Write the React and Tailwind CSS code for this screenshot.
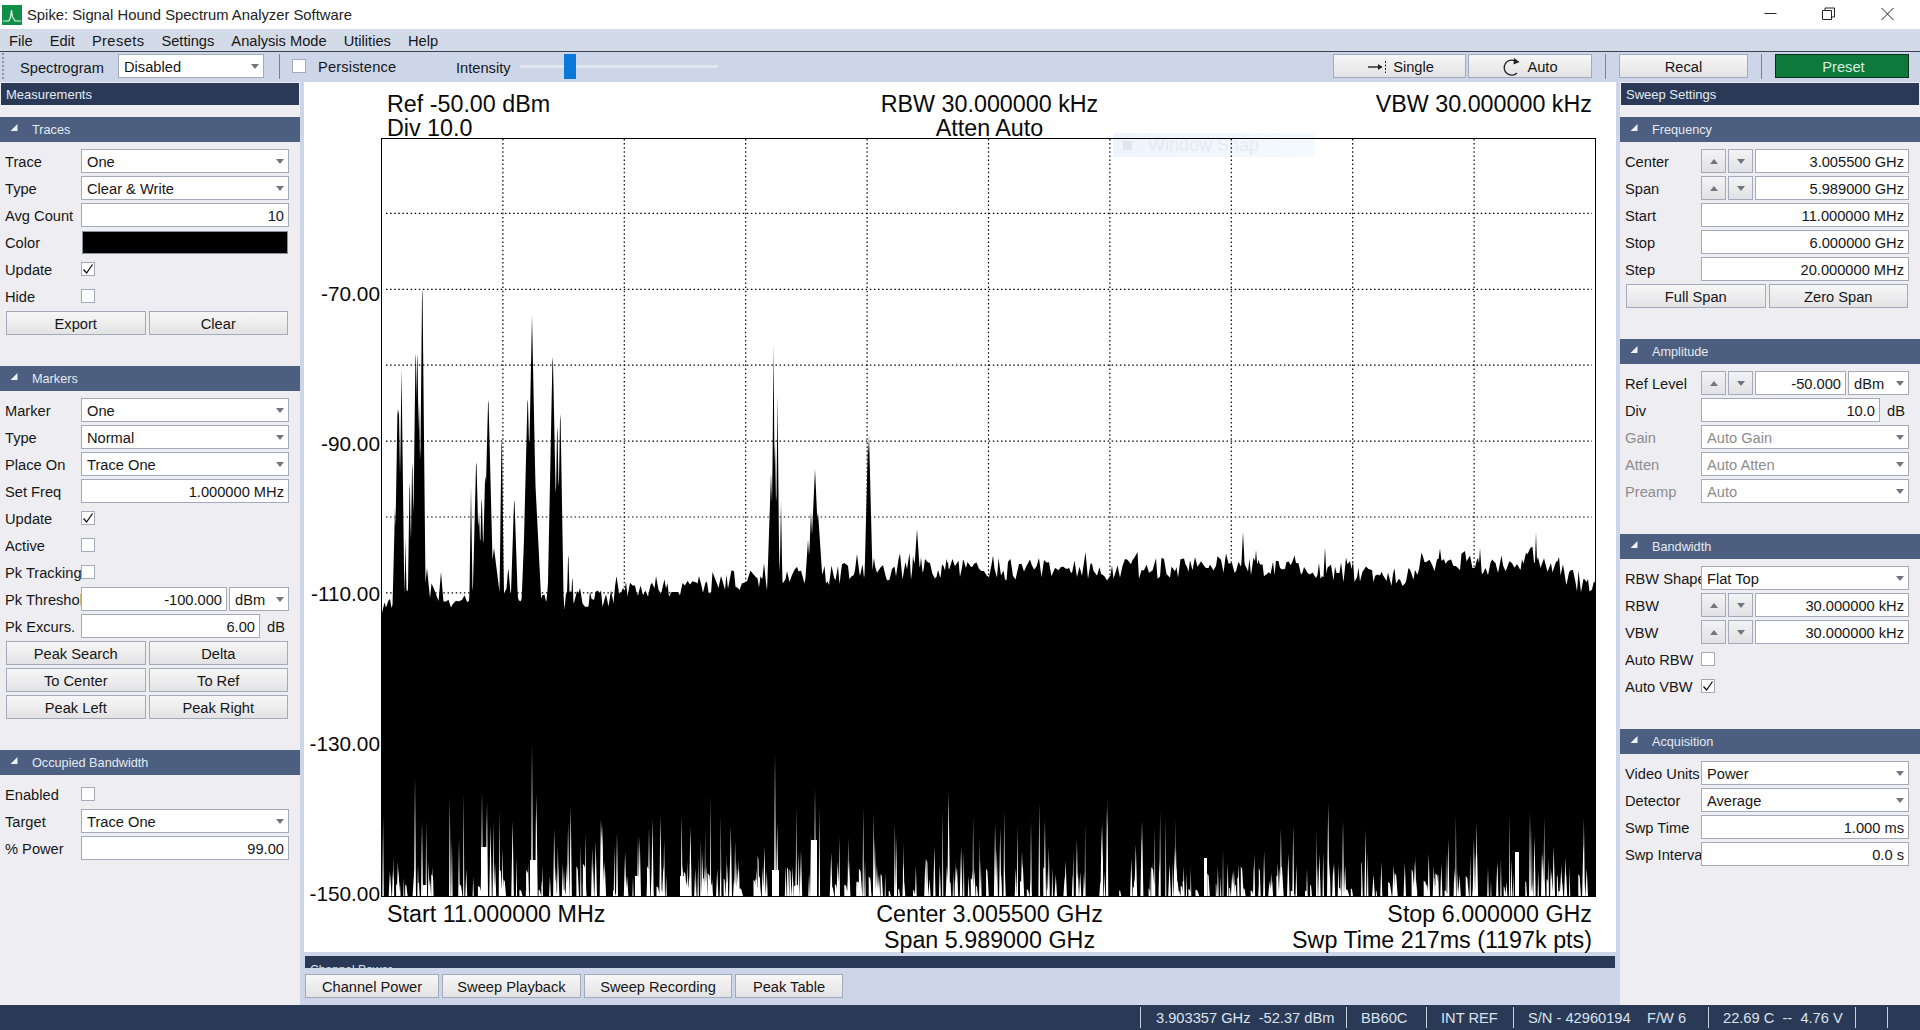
import React from "react";

/* ---------- spectrum data (deterministic) ---------- */
function rng(seed) {
  let a = seed;
  return () => {
    a |= 0; a = (a + 0x6d2b79f5) | 0;
    let t = Math.imul(a ^ (a >>> 15), 1 | a);
    t = (t + Math.imul(t ^ (t >>> 7), 61 | t)) ^ t;
    return ((t ^ (t >>> 14)) >>> 0) / 4294967296;
  };
}
const FLOOR = [[381,612],[395,608],[430,600],[560,603],[600,598],[680,587],[760,582],[900,574],[1000,572],[1240,566],[1300,570],[1405,578],[1418,566],[1560,562],[1566,578],[1596,580]];
const floorAt = (x) => {
  for (let i = 0; i < FLOOR.length - 1; i++) {
    const [x0, y0] = FLOOR[i], [x1, y1] = FLOOR[i + 1];
    if (x >= x0 && x <= x1) return y0 + ((y1 - y0) * (x - x0)) / (x1 - x0);
  }
  return 580;
};
const PEAKS = [[395,507,40],[397.7,397,60],[398.7,397,60],[401.5,368,80],[405.5,537,60],[409.7,469,70],[412.3,449,70],[415.7,337,80],[417.3,338,80],[419,400,60],[422.3,268,100],[427,568,10],[441,572,12],[471,486,70],[476.3,454,40],[479,511,30],[481.7,491,40],[485.3,468,40],[488.3,392,40],[494,548,8],[501.7,422,80],[508.3,567,12],[514.3,494,30],[524.3,533,25],[527.7,391,40],[532,315,50],[535,476,20],[548.3,582,10],[552.7,347,50],[557.3,415,60],[560.3,402,60],[568.3,547,40],[572.3,573,25],[764,563,10],[771,473,30],[773.5,344,120],[775,442,60],[777.5,395,100],[781,501,60],[808,540,15],[811,511,25],[815,469,22],[818,512,15],[857,554,8],[868,440,40],[869,434,40],[874,558,8],[913,555,20],[917,529,15],[921,557,10],[948,562,20],[963,560,8],[1243,532,20],[1536,532,30],[1256,550,12],[1325,547,20],[1480,548,15]];
function buildTrace() {
  const r = rng(7);
  // jagged profile: knots every 2-3 px, plus a slow wander over ~25 px
  const knots = [];
  let kx = 381;
  while (kx < 1600) {
    const up = r();
    knots.push([kx, 9 - Math.pow(up, 1.3) * 22 - (r() > 0.92 ? 8 : 0)]);
    kx += 1.5 + Math.floor(r() * 2.4);
  }
  const slow = Array.from({ length: 60 }, () => r() * 10 - 5);
  const noiseAt = (x) => {
    let lo = 0, hi = knots.length - 1;
    while (hi - lo > 1) {
      const m = (lo + hi) >> 1;
      if (knots[m][0] <= x) lo = m; else hi = m;
    }
    const [x0, n0] = knots[lo], [x1, n1] = knots[hi];
    const s = (x - 381) / 25;
    const i = Math.floor(s), f = s - i;
    const w = slow[i] * (1 - f) + slow[i + 1] * f;
    return n0 + ((n1 - n0) * (x - x0)) / (x1 - x0) + w;
  };
  let d = "M382 897";
  for (let x = 382; x <= 1595; x += 0.5) {
    let y = floorAt(x) + noiseAt(x);
    for (const [px, py, s] of PEAKS) y = Math.min(y, py + Math.abs(x - px) * s);
    d += `L${x} ${y.toFixed(1)}`;
  }
  return d + "L1595 897Z";
}
function buildSpikes() {
  const r = rng(41);
  let d = "";
  for (let i = 0; i < 340; i++) {
    const x = 382 + r() * 1213;
    const h = 12 + Math.pow(r(), 3) * 78 + r() * 20;
    const w = 0.45 + r() * 0.95;
    d += `M${(x - w).toFixed(1)} 896L${x.toFixed(1)} ${(896 - h).toFixed(1)}L${(x + w).toFixed(1)} 896Z`;
  }
  for (let i = 0; i < 120; i++) {
    const x = 382 + r() * 1210;
    const w = 1 + r() * 3;
    const h = 5 + r() * r() * 38;
    d += `M${x.toFixed(1)} 896L${x.toFixed(1)} ${(896 - h).toFixed(1)}L${(x + w * 0.5).toFixed(1)} ${(896 - h * 0.9).toFixed(1)}L${(x + w).toFixed(1)} 896Z`;
  }
  const tall = [[415,777],[532,743],[775,753],[815,788],[482,790],[487,800],[617,832],[638,836],[1530,812],[1343,820]];
  tall.forEach(([x, y]) => { d += `M${x - 1} 896L${x} ${y}L${x + 1} 896Z`; });
  const blocks = [[481,847,6],[530,860,6],[772,870,7],[811,840,6],[680,876,5],[635,876,5],[423,885,4],[1515,852,4],[1204,858,3]];
  blocks.forEach(([x, y, w]) => { d += `M${x} 896V${y}H${x + w}V896Z`; });
  return d;
}
const TRACE = buildTrace();
const SPIKES = buildSpikes();
const VGRID = Array.from({ length: 9 }, (_, k) => 381.5 + 121.4 * (k + 1));
const HGRID = Array.from({ length: 9 }, (_, k) => 137.5 + 75.9 * (k + 1));

function Spectrum() {
  return (
    <svg viewBox="382 139 1213 757" className="block w-full h-full">
      <g stroke="#000" strokeWidth="1.2" strokeDasharray="1.5 2.6" fill="none">
        {VGRID.map((x) => <line key={x} x1={x} x2={x} y1="139" y2="896" />)}
        {HGRID.map((y) => <line key={y} x1="386" x2="1592" y1={y} y2={y} />)}
      </g>
      <path d={TRACE} fill="#000" />
      <path d={SPIKES} fill="#fff" />
    </svg>
  );
}

/* ---------- small controls ---------- */
const Caret = ({ c = "border-t-[#6f7680]" }) => (
  <span className={`w-0 h-0 border-x-[4px] border-x-transparent border-t-[5px] ${c}`} />
);
const Combo = ({ v, dis, className = "flex-1" }) => (
  <div className={`${className} h-[24px] flex items-center justify-between pl-[5px] pr-[4px] bg-white border border-[#a3abba] ${dis ? "text-[#8c8c8c]" : ""}`}>
    <span className="whitespace-nowrap pt-[1px]">{v}</span>
    <Caret />
  </div>
);
const Input = ({ v, className = "flex-1" }) => (
  <div className={`${className} h-[24px] flex items-center justify-end pr-[4px] pt-[2px] bg-white border border-[#a3abba] whitespace-nowrap`}>{v}</div>
);
const Check = ({ on }) => (
  <div className="w-[14px] h-[14px] bg-white border border-[#a3abba] flex items-center justify-center shrink-0">
    {on && (
      <svg width="12" height="12" viewBox="0 0 12 12" fill="none" stroke="#111" strokeWidth="1.3">
        <path d="M1.5 6.5 L4.6 10 L10.5 1.5" />
      </svg>
    )}
  </div>
);
const Btn = ({ children, className = "flex-1" }) => (
  <div className={`${className} h-[24px] flex items-center justify-center pt-[2px] bg-gradient-to-b from-[#f7f7f7] to-[#e3e3e5] border border-[#a3abba] whitespace-nowrap`}>{children}</div>
);
const Step = () => (
  <>
    <div className="w-[25px] h-[24px] flex items-center justify-center bg-gradient-to-b from-[#f3f3f5] to-[#e2e2e6] border border-[#a3abba] shrink-0">
      <span className="w-0 h-0 border-x-[4px] border-x-transparent border-b-[5px] border-b-[#6f7680]" />
    </div>
    <div className="w-[25px] h-[24px] flex items-center justify-center bg-gradient-to-b from-[#f3f3f5] to-[#e2e2e6] border border-[#a3abba] shrink-0">
      <Caret />
    </div>
  </>
);
const Row = ({ label, dis, children }) => (
  <div className="flex items-center h-[24px] mb-[3px] pl-[5px] pr-[11px]">
    <div className={`w-[76px] shrink-0 overflow-hidden whitespace-nowrap pt-[2px] ${dis ? "text-[#8c8c8c]" : ""}`}>{label}</div>
    <div className="flex-1 flex items-center gap-[2px] min-w-0">{children}</div>
  </div>
);
const BtnRow = ({ a, b }) => (
  <div className="flex h-[24px] mb-[3px] pl-[6px] pr-[12px] gap-[3px]">
    <Btn>{a}</Btn>
    <Btn>{b}</Btn>
  </div>
);
const Section = ({ title, first, children }) => (
  <div className={first ? "mt-[12px]" : "mt-[31px]"}>
    <div className="h-[25px] bg-[#4c5f80] flex items-center text-[12.7px] text-[#e4eaf3]">
      <svg width="10" height="10" viewBox="0 0 10 10" className="ml-[9px] mb-[3px]"><path d="M8.5 1 V8 H1.5 Z" fill="#eef2f8" /></svg>
      <span className="ml-[13px] pt-[2px]">{title}</span>
    </div>
    <div className="pt-[7px]">{children}</div>
  </div>
);
const DarkBar = ({ title }) => (
  <div className="h-[22px] mx-[1px] bg-[#2a3a56] flex items-center pl-[5px] pt-[2px] text-[13px] text-[#e4eaf3]">{title}</div>
);
const VSep = () => <div className="w-px h-[25px] bg-[#79818f] shrink-0" />;

/* ---------- panels ---------- */
function LeftPanel() {
  return (
    <div className="w-[300px] shrink-0 bg-[#eeeef2] pt-px">
      <DarkBar title="Measurements" />
      <Section title="Traces" first>
        <Row label="Trace"><Combo v="One" /></Row>
        <Row label="Type"><Combo v="Clear & Write" /></Row>
        <Row label="Avg Count"><Input v="10" /></Row>
        <Row label="Color"><div className="flex-1 mx-px h-[23px] bg-black border border-[#8a92a0]" /></Row>
        <Row label="Update"><Check on /></Row>
        <Row label="Hide"><Check /></Row>
        <BtnRow a="Export" b="Clear" />
      </Section>
      <Section title="Markers">
        <Row label="Marker"><Combo v="One" /></Row>
        <Row label="Type"><Combo v="Normal" /></Row>
        <Row label="Place On"><Combo v="Trace One" /></Row>
        <Row label="Set Freq"><Input v="1.000000 MHz" /></Row>
        <Row label="Update"><Check on /></Row>
        <Row label="Active"><Check /></Row>
        <Row label="Pk Tracking"><Check /></Row>
        <Row label="Pk Threshold"><Input v="-100.000" className="w-[146px]" /><Combo v="dBm" className="flex-1" /></Row>
        <Row label="Pk Excurs."><Input v="6.00" className="w-[179px]" /><span className="ml-[5px] pt-[2px]">dB</span></Row>
        <BtnRow a="Peak Search" b="Delta" />
        <BtnRow a="To Center" b="To Ref" />
        <BtnRow a="Peak Left" b="Peak Right" />
      </Section>
      <Section title="Occupied Bandwidth">
        <Row label="Enabled"><Check /></Row>
        <Row label="Target"><Combo v="Trace One" /></Row>
        <Row label="% Power"><Input v="99.00" /></Row>
      </Section>
    </div>
  );
}

function RightPanel() {
  return (
    <div className="w-[300px] shrink-0 bg-[#eeeef2] pt-px">
      <DarkBar title="Sweep Settings" />
      <Section title="Frequency" first>
        <Row label="Center"><Step /><Input v="3.005500 GHz" /></Row>
        <Row label="Span"><Step /><Input v="5.989000 GHz" /></Row>
        <Row label="Start"><Input v="11.000000 MHz" /></Row>
        <Row label="Stop"><Input v="6.000000 GHz" /></Row>
        <Row label="Step"><Input v="20.000000 MHz" /></Row>
        <BtnRow a="Full Span" b="Zero Span" />
      </Section>
      <Section title="Amplitude">
        <Row label="Ref Level"><Step /><Input v="-50.000" className="w-[91px]" /><Combo v="dBm" className="flex-1" /></Row>
        <Row label="Div"><Input v="10.0" className="w-[179px]" /><span className="ml-[5px] pt-[2px]">dB</span></Row>
        <Row label="Gain" dis><Combo v="Auto Gain" dis /></Row>
        <Row label="Atten" dis><Combo v="Auto Atten" dis /></Row>
        <Row label="Preamp" dis><Combo v="Auto" dis /></Row>
      </Section>
      <Section title="Bandwidth">
        <Row label="RBW Shape"><Combo v="Flat Top" /></Row>
        <Row label="RBW"><Step /><Input v="30.000000 kHz" /></Row>
        <Row label="VBW"><Step /><Input v="30.000000 kHz" /></Row>
        <Row label="Auto RBW"><Check /></Row>
        <Row label="Auto VBW"><Check on /></Row>
      </Section>
      <Section title="Acquisition">
        <Row label="Video Units"><Combo v="Power" /></Row>
        <Row label="Detector"><Combo v="Average" /></Row>
        <Row label="Swp Time"><Input v="1.000 ms" /></Row>
        <Row label="Swp Interval"><Input v="0.0 s" /></Row>
      </Section>
    </div>
  );
}

function Plot() {
  const labels = ["-70.00", "-90.00", "-110.00", "-130.00", "-150.00"];
  return (
    <div className="relative h-[870px] bg-white text-[23.3px] text-[#0a0a0a]">
      <div className="absolute left-[809px] top-[51px] w-[202px] h-[24px] bg-gradient-to-r from-[#eef4fd] to-[#f3fbff] flex items-center text-[18px] text-[#e7ebef]">
        <span className="ml-[10px] w-[9px] h-[9px] bg-[#dfe5ef] shrink-0" />
        <span className="ml-[16px]">Window Snap</span>
      </div>
      <div className="relative ml-[77px] w-[1215px] h-[56px] pt-[10px] pl-[6px] pr-[4px] grid grid-cols-3 leading-[24px]">
        <div className="whitespace-nowrap">Ref -50.00 dBm<br />Div 10.0</div>
        <div className="text-center whitespace-nowrap">RBW 30.000000 kHz<br />Atten Auto</div>
        <div className="text-right whitespace-nowrap">VBW 30.000000 kHz</div>
      </div>
      <div className="relative flex h-[759px]">
        <div className="w-[77px] shrink-0 pt-[81px] pr-[1px] text-right text-[20.8px]">
          {labels.map((l) => (
            <div key={l} className="h-[150px] flex items-center justify-end">{l}</div>
          ))}
        </div>
        <div className="w-[1215px] h-[759px] border border-black">
          <Spectrum />
        </div>
      </div>
      <div className="ml-[77px] w-[1215px] pt-[4px] pl-[6px] pr-[4px] grid grid-cols-3 leading-[26px]">
        <div className="whitespace-nowrap">Start 11.000000 MHz</div>
        <div className="text-center whitespace-nowrap">Center 3.005500 GHz<br />Span 5.989000 GHz</div>
        <div className="text-right whitespace-nowrap">Stop 6.000000 GHz<br />Swp Time 217ms (1197k pts)</div>
      </div>
    </div>
  );
}

function Center() {
  return (
    <div className="flex-1 min-w-0 flex flex-col">
      <Plot />
      <div className="h-[12px] mt-[4px] mx-px bg-[#2a3a56] overflow-hidden text-[12px] text-[#d8e0ee] pl-[5px] pt-[7px] leading-[14px]">Channel Power</div>
      <div className="flex pt-[6px] pl-px gap-[3px]">
        <Btn className="w-[134px]">Channel Power</Btn>
        <Btn className="w-[139px]">Sweep Playback</Btn>
        <Btn className="w-[148px]">Sweep Recording</Btn>
        <Btn className="w-[108px]">Peak Table</Btn>
      </div>
    </div>
  );
}

function StatusCell({ w, pl = 14, children }) {
  return (
    <div className="h-[21px] border-l border-[#c9d1df] flex items-center whitespace-pre shrink-0" style={{ width: w, paddingLeft: pl }}>
      {children}
    </div>
  );
}

export default function App() {
  return (
    <div className="w-[1920px] h-[1030px] overflow-hidden flex flex-col bg-[#ccd6e8] text-[14.67px] text-[#161616] font-['Liberation_Sans',sans-serif]">
      {/* title bar */}
      <div className="h-[29px] shrink-0 bg-white flex items-center">
        <svg width="20" height="20" viewBox="0 0 20 20" className="ml-[2px]">
          <rect width="20" height="20" fill="#0f8f46" />
          <path d="M1 16 H7 L8.5 12 L9.5 5 L10.5 12 L12 14 L13 16 H19" fill="none" stroke="#dff5e6" strokeWidth="1.2" />
        </svg>
        <span className="ml-[5px] pt-[2px] text-[#222] text-[14.8px]">Spike: Signal Hound Spectrum Analyzer Software</span>
        <div className="flex-1" />
        <svg width="160" height="29" viewBox="0 0 160 29" fill="none" stroke="#222" strokeWidth="1" className="mr-[6px] shrink-0">
          <path d="M10.5 13.5 H22.5" />
          <path d="M68.5 10.5 H77.5 V19.5 H68.5 Z M71 10.5 V8 H80.5 V17 H77.5" />
          <path d="M127.5 8 L139.5 20 M139.5 8 L127.5 20" />
        </svg>
      </div>
      {/* menu bar */}
      <div className="h-[22px] shrink-0 bg-[#d3dbe8] flex items-center gap-[17px] pl-[9px] pt-[1px]">
        <span>File</span>
        <span>Edit</span>
        <span className="tracking-[0.4px]">Presets</span>
        <span>Settings</span>
        <span>Analysis Mode</span>
        <span>Utilities</span>
        <span>Help</span>
      </div>
      {/* toolbar */}
      <div className="h-[31px] shrink-0 bg-[#ccd6e8] border-t border-[#39424f] flex items-center pb-[2px]">
        <div className="ml-[2px] w-[2px] h-[26px] border-l-2 border-dotted border-[#8e96a6]" />
        <div className="ml-[16px] w-[98px] shrink-0 pt-[3px]">Spectrogram</div>
        <Combo v="Disabled" className="w-[146px]" />
        <div className="ml-[15px]"><VSep /></div>
        <div className="ml-[12px]"><Check /></div>
        <div className="ml-[12px] w-[138px] shrink-0 pt-[1px] tracking-[0.15px]">Persistence</div>
        <div className="w-[64px] shrink-0 pt-[3px]">Intensity</div>
        <div className="w-[44px] h-[3px] bg-[#e2e6ee]" />
        <div className="w-[12px] h-[25px] bg-[#0a78d8]" />
        <div className="w-[142px] h-[3px] bg-[#e2e6ee]" />
        <div className="flex-1" />
        <Btn className="w-[133px]">
          <svg width="20" height="14" viewBox="0 0 20 14" className="mr-[5px] ml-[3px]" fill="none" stroke="#222">
            <path d="M0 7 H14" strokeWidth="1.4" />
            <path d="M10 4 L14.5 7 L10 10 Z" fill="#222" stroke="none" />
            <path d="M17.5 1 V13" strokeDasharray="2 1.5" />
          </svg>
          Single
        </Btn>
        <Btn className="w-[124px] ml-[2px]">
          <svg width="20" height="20" viewBox="0 0 20 20" className="mr-[5px]" fill="none" stroke="#222" strokeWidth="1.3">
            <path d="M15 16 A7.5 7.5 0 1 1 13 4" />
            <path d="M12 1 L17.5 5 L11.5 7.5 Z" fill="#222" stroke="none" />
          </svg>
          Auto
        </Btn>
        <div className="ml-[13px]"><VSep /></div>
        <Btn className="w-[129px] ml-[13px]">Recal</Btn>
        <div className="ml-[13px]"><VSep /></div>
        <Btn className="w-[134px] ml-[13px] pl-[3px] !bg-none !bg-[#0d7a3c] !border-[#0b2e1b] !text-[#d9efe1]">Preset</Btn>
        <div className="w-[11px] shrink-0" />
      </div>
      {/* main */}
      <div className="h-[923px] shrink-0 flex">
        <LeftPanel />
        <div className="w-[4px] shrink-0" />
        <Center />
        <div className="w-[4px] shrink-0" />
        <RightPanel />
      </div>
      {/* status bar */}
      <div className="h-[25px] shrink-0 bg-[#2a3a56] text-[#dbe2ee] flex items-center justify-end">
        <StatusCell w={206} pl={15}>3.903357 GHz  -52.37 dBm</StatusCell>
        <StatusCell w={80}>BB60C</StatusCell>
        <StatusCell w={87}>INT REF</StatusCell>
        <StatusCell w={195}>
          <span className="w-[119px]">S/N - 42960194</span><span>F/W 6</span>
        </StatusCell>
        <StatusCell w={147}>22.69 C  --  4.76 V</StatusCell>
        <StatusCell w={32} />
        <StatusCell w={33} />
      </div>
    </div>
  );
}
